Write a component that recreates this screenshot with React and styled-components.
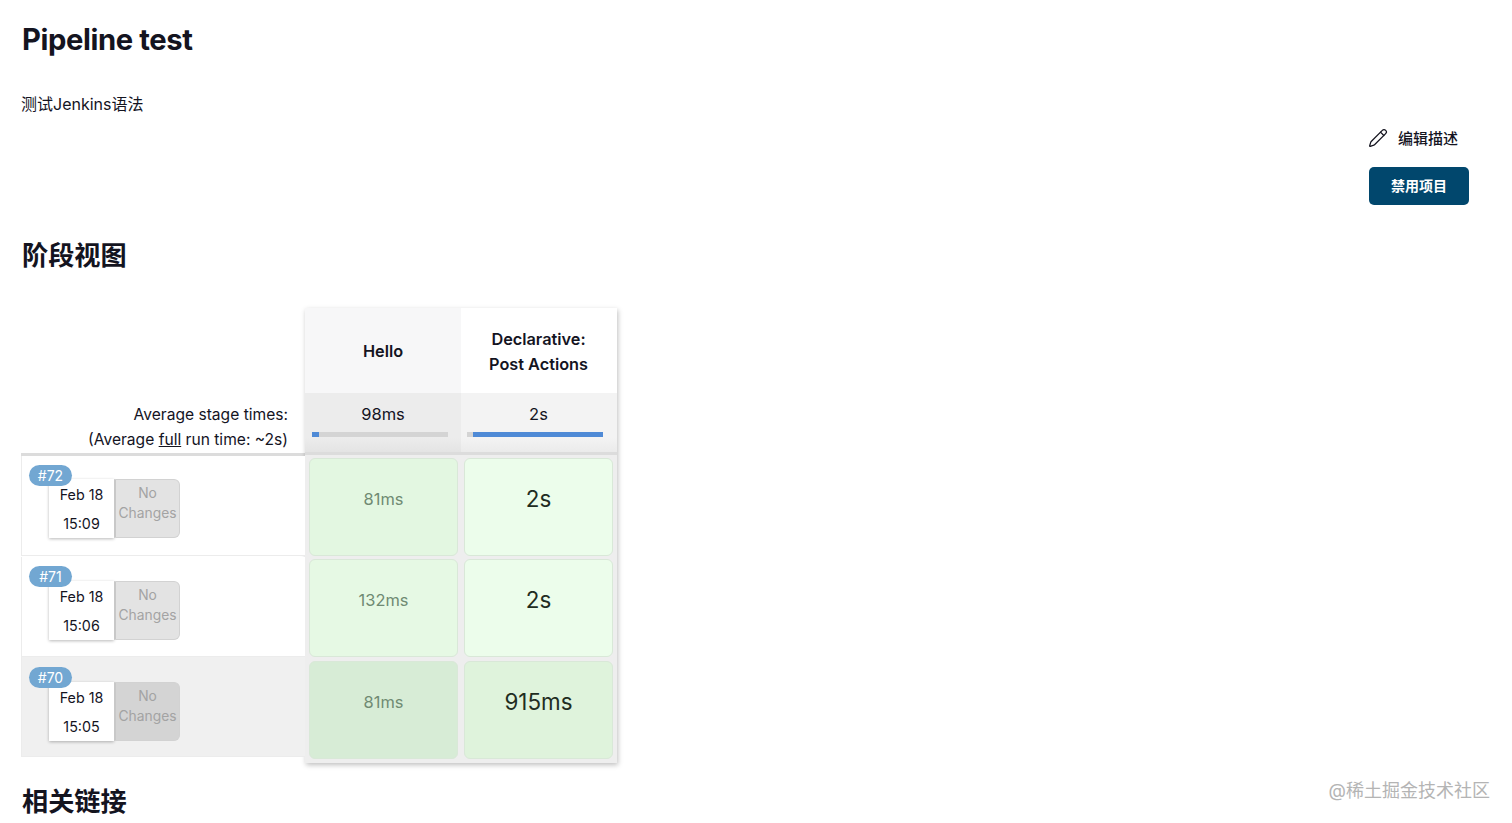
import React from "react";
import styled, { createGlobalStyle } from "styled-components";
import { Pencil } from "lucide-react";

const GlobalStyle = createGlobalStyle`
  html, body {
    margin: 0;
    padding: 0;
    background: #fff;
    overflow: hidden;
  }
  body {
    font-family: Inter, "Noto Sans CJK SC", sans-serif;
    color: #14141f;
  }
`;

const Page = styled.div`
  position: relative;
  height: 823px;
  padding: 0 43px 0 21px;
  box-sizing: border-box;
  overflow: hidden;
`;
const Top = styled.div`
  display: flex;
  justify-content: space-between;
  height: 205px;
`;
const Title = styled.h1`
  margin: 0;
  padding: 21px 0 0 1px;
  font-size: 29.2px;
  line-height: 38px;
  font-weight: 700;
  letter-spacing: -0.4px;
`;
const Description = styled.p`
  margin: 33px 0 0;
  font-size: 16px;
  line-height: 24px;
`;
const Side = styled.div`
  display: flex;
  flex-direction: column;
  align-items: flex-start;
  padding-top: 127px;
  width: 100px;
`;
const EditLink = styled.div`
  display: flex;
  align-items: center;
  gap: 10px;
  margin-left: -1px;
  height: 21px;
  font-size: 15px;
  font-weight: 500;
  white-space: nowrap;
`;
const DisableButton = styled.button`
  margin-top: 19px;
  padding: 0 0 2px;
  width: 100px;
  height: 38px;
  border: 0;
  border-radius: 5px;
  background: #01476d;
  color: #fff;
  font-family: inherit;
  font-size: 14px;
  font-weight: 700;
`;
const Heading = styled.h2`
  margin: 0 0 0 1px;
  font-size: 26.2px;
  line-height: 36px;
  font-weight: 700;
`;
const StageHeading = styled(Heading)`
  padding-top: 33px;
`;
const LinksHeading = styled(Heading)`
  padding-top: 21px;
`;
const StageView = styled.div`
  display: flex;
  margin-top: 34px;
  width: 597px;
`;
const Builds = styled.div`
  width: 284px;
  display: flex;
  flex-direction: column;
`;
const Averages = styled.div`
  height: 148px;
  box-sizing: border-box;
  padding: 0 17px 1px 0;
  display: flex;
  flex-direction: column;
  justify-content: flex-end;
  text-align: right;
  font-size: 15.6px;
  line-height: 25px;
  border-bottom: 3px solid #dcdcdc;
`;
const FullLink = styled.span`
  text-decoration: underline;
`;
const BuildRow = styled.div`
  position: relative;
  height: 100px;
  margin-bottom: 0.5px;
  box-sizing: border-box;
  border-left: 1px solid #ececec;
  border-bottom: 1px solid #ececec;
  padding: ${(p) => p.$cardTop}px 0 0 27px;
  background: ${(p) => (p.$active ? "#f0f0f0" : "#fff")};
`;
const BuildBadge = styled.span`
  position: absolute;
  top: ${(p) => p.$top}px;
  left: 7px;
  z-index: 1;
  width: 43px;
  height: 21px;
  border-radius: 11px;
  background: #72a7d2;
  color: #fff;
  font-size: 14px;
  line-height: 21px;
  text-align: center;
`;
const BuildInfo = styled.div`
  display: flex;
  width: 131px;
  height: 59px;
`;
const BuildDate = styled.div`
  width: 65px;
  box-sizing: border-box;
  padding-top: 1px;
  background: #fff;
  box-shadow: 0 1px 3px rgba(0, 0, 0, 0.28);
  font-size: 14.3px;
  line-height: 29px;
  text-align: center;
`;
const NoChanges = styled.div`
  width: 66px;
  box-sizing: border-box;
  padding-top: 3px;
  border: 1px solid #d2d2d2;
  border-left: 2px solid #c8c8c8;
  border-radius: 0 6px 6px 0;
  background: ${(p) => (p.$active ? "#d4d4d4" : "#e3e3e3")};
  color: #a3a3a3;
  font-size: 13.8px;
  line-height: 20px;
  text-align: center;
`;
const StageTable = styled.div`
  display: grid;
  grid-template-columns: 156px 156px;
  align-content: start;
  width: 312px;
  height: 455px;
  background: #eeeeee;
  box-shadow: 1px 2px 5px rgba(0, 0, 0, 0.25);
`;
const StageHead = styled.div`
  height: 85px;
  box-sizing: border-box;
  padding: ${(p) => (p.$shade ? "1px 0 0" : "2px 1px 0 0")};
  display: flex;
  align-items: center;
  justify-content: center;
  text-align: center;
  font-size: 16.3px;
  line-height: 25px;
  font-weight: 600;
  background: ${(p) => (p.$shade ? "#f7f7f8" : "#ffffff")};
`;
const StageAverage = styled.div`
  height: 62px;
  box-sizing: border-box;
  padding: ${(p) => (p.$shade ? "9px 0 0" : "9px 1px 0 0")};
  text-align: center;
  font-size: 16.5px;
  line-height: 24px;
  background: ${(p) =>
    p.$shade
      ? "linear-gradient(#ececec 75%, #e4e4e4)"
      : "linear-gradient(#f3f3f3 75%, #ebebeb)"};
  border-bottom: 3px solid #dcdcdc;
`;
const ProgressTrack = styled.div`
  margin: 6px 0 0 ${(p) => (p.$shade ? "7px" : "6px")};
  height: 5px;
  width: 136px;
  background: #d4d4d4;
`;
const ProgressFill = styled.div`
  height: 100%;
  background: #4f8ad6;
`;
const StageCell = styled.div`
  margin: 3px ${(p) => (p.$strong ? "4px" : "3px")} 0.3px
    ${(p) => (p.$strong ? "3px" : "4px")};
  height: 98px;
  box-sizing: border-box;
  padding-top: 26px;
  border: 1px solid #d9e8d8;
  border-radius: 6px;
  text-align: center;
  background: ${(p) => p.$bg};
  color: ${(p) => (p.$strong ? "#1f2d22" : "#6f8a72")};
  font-size: ${(p) => (p.$strong ? "22.4px" : "16.4px")};
  line-height: 28px;
`;
const Watermark = styled.div`
  position: absolute;
  right: 22px;
  top: 779px;
  color: #b4b4b4;
  font-size: 18px;
  line-height: 24px;
`;

const builds = [
  { id: "#72", time: "15:09", hello: "81ms", post: "2s", bgA: "#e3f7e1", bgB: "#ecfdeb", cardTop: 23, badgeTop: 9 },
  { id: "#71", time: "15:06", hello: "132ms", post: "2s", bgA: "#e6f9e4", bgB: "#ecfdeb", cardTop: 24.5, badgeTop: 9.5 },
  { id: "#70", time: "15:05", hello: "81ms", post: "915ms", bgA: "#d7ecd6", bgB: "#dff3dc", cardTop: 25, badgeTop: 10, active: true },
];

export default function App() {
  return (
    <Page>
      <GlobalStyle />
      <Top>
        <div>
          <Title>Pipeline test</Title>
          <Description>测试Jenkins语法</Description>
        </div>
        <Side>
          <EditLink>
            <Pencil size={20} strokeWidth={1.5} />
            编辑描述
          </EditLink>
          <DisableButton>禁用项目</DisableButton>
        </Side>
      </Top>
      <StageHeading>阶段视图</StageHeading>
      <StageView>
        <Builds>
          <Averages>
            <div>Average stage times:</div>
            <div>
              (Average <FullLink>full</FullLink> run time: ~2s)
            </div>
          </Averages>
          {builds.map((b) => (
            <BuildRow key={b.id} $active={b.active} $cardTop={b.cardTop}>
              <BuildBadge $top={b.badgeTop}>{b.id}</BuildBadge>
              <BuildInfo>
                <BuildDate>
                  Feb 18
                  <br />
                  {b.time}
                </BuildDate>
                <NoChanges $active={b.active}>
                  No
                  <br />
                  Changes
                </NoChanges>
              </BuildInfo>
            </BuildRow>
          ))}
        </Builds>
        <StageTable>
          <StageHead $shade>Hello</StageHead>
          <StageHead>
            Declarative:
            <br />
            Post Actions
          </StageHead>
          <StageAverage $shade>
            98ms
            <ProgressTrack $shade>
              <ProgressFill style={{ width: "5%" }} />
            </ProgressTrack>
          </StageAverage>
          <StageAverage>
            2s
            <ProgressTrack>
              <ProgressFill style={{ width: "95.5%", marginLeft: "4.5%" }} />
            </ProgressTrack>
          </StageAverage>
          {builds.map((b) => (
            <React.Fragment key={b.id}>
              <StageCell $bg={b.bgA}>{b.hello}</StageCell>
              <StageCell $bg={b.bgB} $strong>
                {b.post}
              </StageCell>
            </React.Fragment>
          ))}
        </StageTable>
      </StageView>
      <LinksHeading>相关链接</LinksHeading>
      <Watermark>@稀土掘金技术社区</Watermark>
    </Page>
  );
}
